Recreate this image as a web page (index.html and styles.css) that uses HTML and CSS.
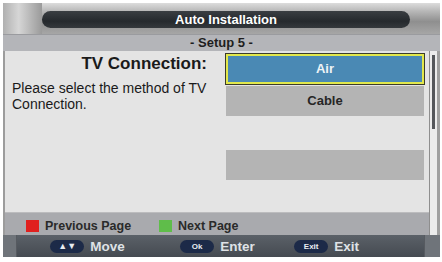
FILE: index.html
```html
<!DOCTYPE html>
<html lang="en">
<head>
    <meta charset="UTF-8">
    <title>Auto Installation</title>
    <link rel="stylesheet" href="styles.css">
</head>
<body>
    <div class="screen">
        <div class="header">
            <div class="header-cap"></div>
            <div class="header-pill">Auto Installation</div>
        </div>
        <div class="subtitle">- Setup 5 -</div>

        <div class="body">
            <div class="main">
                <div class="content">
                    <div class="info">
                        <div class="info-title">TV Connection:</div>
                        <div class="info-text">Please select the method of TV Connection.</div>
                    </div>
                    <div class="options">
                        <div class="option selected">Air</div>
                        <div class="option">Cable</div>
                        <div class="option empty"></div>
                        <div class="option"></div>
                    </div>
                </div>
                <div class="legend">
                    <span class="key red"></span><span class="legend-text">Previous Page</span>
                    <span class="key green"></span><span class="legend-text">Next Page</span>
                </div>
            </div>
            <div class="scrollbar">
                <div class="thumb"></div>
            </div>
        </div>

        <div class="footer">
            <div class="footer-cap"></div>
            <div class="hints">
                <div class="hint"><span class="btn">&#9650;&#9660;</span>Move</div>
                <div class="hint"><span class="btn small">Ok</span>Enter</div>
                <div class="hint"><span class="btn small">Exit</span>Exit</div>
            </div>
            <div class="footer-cap"></div>
        </div>
    </div>
</body>
</html>
```

FILE: styles.css
```css
* {
    box-sizing: border-box;
    margin: 0;
    padding: 0;
}

body {
    background: #fff;
    font-family: "Liberation Sans", Arial, sans-serif;
}

.screen {
    width: 437px;
    margin: 3px 0 0 3px;
}

/* 顶部标题栏 */
.header {
    height: 31px;
    display: flex;
    align-items: center;
    padding: 0 30px 0 0;
    background: linear-gradient(#dcdcdc 0%, #b9b9b9 25%, #8f8f8f 60%, #a6a6a6 100%);
}

.header-cap {
    width: 39px;
    height: 100%;
    background: linear-gradient(90deg, #b0b0b0, #d6d6d6 40%, #9a9a9a);
}

.header-pill {
    flex: 1;
    height: 17px;
    margin-top: 1px;
    border-radius: 9px;
    background: linear-gradient(#3a3e42, #25292d 60%, #34383c);
    color: #fff;
    font-size: 13px;
    font-weight: bold;
    text-align: center;
    line-height: 17px;
}

.subtitle {
    height: 17px;
    background: #b4b5b9;
    border-top: 1px solid #9a9b9f;
    color: #1e1e1e;
    font-size: 13px;
    font-weight: bold;
    text-align: center;
    line-height: 16px;
}

.body {
    display: flex;
    border-left: 2px solid #9c9c9c;
}

.main {
    flex: 1;
}

.content {
    height: 161px;
    display: flex;
    background: #e4e4e4;
}

.info {
    width: 221px;
    padding: 3px 0 0 7px;
}

.info-title {
    padding-right: 19px;
    text-align: right;
    font-size: 17px;
    font-weight: bold;
    color: #1a1a1a;
    line-height: 20px;
}

.info-text {
    margin-top: 6px;
    font-size: 14px;
    color: #1a1a1a;
    line-height: 16px;
}

.options {
    width: 198px;
    padding-top: 3px;
    display: flex;
    flex-direction: column;
    gap: 2px;
}

.option {
    height: 30px;
    background: #b4b4b4;
    color: #262626;
    font-size: 13px;
    font-weight: bold;
    text-align: center;
    line-height: 30px;
}

.option.empty {
    background: transparent;
}

.option.selected {
    background: #4a89b4;
    color: #eef3f6;
    border: 2px solid #e2e84c;
    outline: 1px solid #3c3c2a;
    line-height: 26px;
}

.legend {
    height: 23px;
    display: flex;
    align-items: center;
    padding: 3px 0 0 21px;
    background: #a9aaae;
    border-top: 1px solid #bcbcbe;
}

.key {
    width: 13px;
    height: 12px;
    margin-right: 6px;
}

.key.red {
    background: #e0201e;
}

.key.green {
    background: #5fbd4a;
}

.legend-text {
    width: 114px;
    font-size: 12.5px;
    font-weight: bold;
    color: #2a2a2a;
}

.scrollbar {
    width: 11px;
    padding: 4px 2px 0;
    background: #ececec;
    border-left: 1px solid #8e8e8e;
    border-right: 3px solid #a0a0a0;
}

.thumb {
    height: 74px;
    background: #55575b;
}

/* 底部按键提示 */
.footer {
    height: 22px;
    display: flex;
    background: linear-gradient(#5b6168, #454a51);
}

.footer-cap {
    width: 24px;
    background: #6f747a;
    border-right: 1px solid #565a60;
}

.footer-cap:last-child {
    width: 27px;
    border-right: none;
    border-left: 1px solid #565a60;
}

.hints {
    flex: 1;
    display: flex;
    padding-left: 33px;
    align-items: center;
}

.hint {
    width: 130px;
    display: flex;
    align-items: center;
    color: #dfe2e6;
    font-size: 13.5px;
    font-weight: bold;
}

.hint:nth-child(2) {
    width: 114px;
}

.btn {
    width: 34px;
    height: 13px;
    margin-right: 6px;
    border-radius: 7px;
    background: #1c2a48;
    color: #e8ecf2;
    font-size: 9px;
    text-align: center;
    line-height: 13px;
}

.btn.small {
    font-size: 8px;
}
```
